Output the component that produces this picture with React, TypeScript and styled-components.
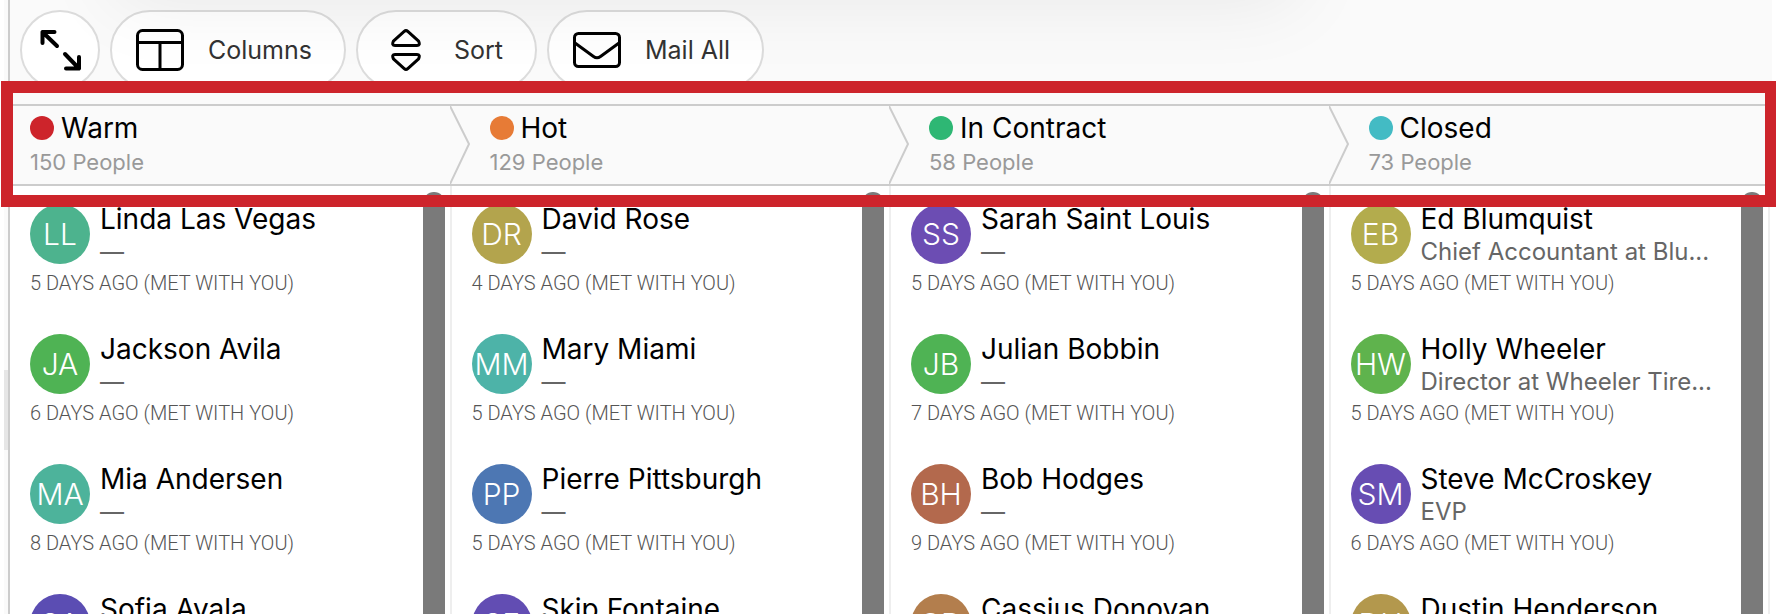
import React from 'react';
import styled, { createGlobalStyle } from 'styled-components';

const GlobalStyle = createGlobalStyle`
  *, *::before, *::after { box-sizing: border-box; }
  body {
    margin: 0;
    background: #fff;
    color: #000;
    font-family: Inter, "Liberation Sans", sans-serif;
  }
  h2, h3, p, ul { margin: 0; padding: 0; font-weight: 400; }
  ul { list-style: none; }
`;

const Page = styled.div`
  display: flex;
  height: 100vh;
  padding: 0 4px;
  overflow: hidden;
`;

const Gutter = styled.div`
  flex: none;
  display: flex;
  flex-direction: column;
  justify-content: flex-end;
  width: 4px;
  background: #fafafa;
`;

const GutterThumb = styled.div`
  height: 80px;
  margin-bottom: 164px;
  background: #e6e6e6;
`;

const Main = styled.main`
  position: relative;
  flex: 1;
  min-width: 0;
  display: flex;
  flex-direction: column;
  border-left: 2px solid #ccc;
  background: #fafafa;
`;

/* Soft shadow cast by the bar above the board */
const TopShadow = styled.div`
  position: absolute;
  z-index: 2;
  left: 6%;
  right: 27%;
  top: -200px;
  height: 200px;
  box-shadow: 0 0 80px rgba(0, 0, 0, 0.08);
  pointer-events: none;
`;

const Toolbar = styled.div`
  flex: none;
  display: flex;
  gap: 10px;
  padding: 10px 10px 14px;
`;

const ToolButton = styled.button<{ $round?: boolean }>`
  display: flex;
  align-items: center;
  justify-content: center;
  gap: 24px;
  height: 80px;
  min-width: 80px;
  padding: ${(p) => (p.$round ? '0' : '0 32px 0 24px')};
  border: 2px solid #dcdcdc;
  border-radius: 40px;
  background: #fff;
  color: #333;
  font: 400 25px Inter, "Liberation Sans", sans-serif;
`;

const StageHeader = styled.header`
  position: relative;
  flex: none;
  display: grid;
  grid-template-columns: repeat(4, 1fr);
  height: 82px;
  padding-right: 4px;
  border-top: 2px solid #ccc;
  border-bottom: 2px solid #ccc;
`;

const Highlight = styled.div`
  position: absolute;
  z-index: 3;
  inset: -25px -5px -23px -9px;
  border: 12px solid #cd242b;
  pointer-events: none;
`;

const Stage = styled.div`
  display: flex;
  padding-left: 20px;

  & + & { padding-left: 0; }
`;

const Chevron = styled.svg`
  flex: none;
  width: 20px;
  height: 78px;
  margin-right: 20px;
`;

const StageText = styled.div`
  padding-top: 6px;
`;

const StageName = styled.h2`
  display: flex;
  align-items: center;
  gap: 7px;
  font-size: 28px;
  line-height: 32px;
`;

const StageDot = styled.span<{ $color: string }>`
  width: 24px;
  height: 24px;
  border-radius: 50%;
  background: ${(p) => p.$color};
`;

const StageCount = styled.p`
  color: #999;
  font-size: 22px;
  line-height: 36px;
`;

const Board = styled.div`
  flex: 1;
  min-height: 0;
  display: grid;
  grid-template-columns: repeat(4, 1fr);
  margin-right: 2px;
  border-right: 2px solid #eee;
  background: #fff;
  box-shadow: 6px 0 0 #fff;
`;

const Column = styled.section`
  display: flex;
  min-width: 0;
  min-height: 0;

  & + & { border-left: 2px solid #eee; }
`;

const PeopleList = styled.ul`
  flex: 1;
  min-width: 0;
  padding: 18px 0 0 20px;
  overflow: hidden;
`;

const ScrollThumb = styled.div`
  flex: none;
  width: 22px;
  margin: 6px 5px 0 0;
  border-radius: 11px 11px 0 0;
  background: #7a7a7a;
`;

const Person = styled.li`
  height: 130px;
`;

const PersonHead = styled.div`
  display: flex;
  align-items: flex-start;
  gap: 10px;
`;

const Avatar = styled.span<{ $color: string }>`
  flex: none;
  display: flex;
  align-items: center;
  justify-content: center;
  width: 60px;
  height: 60px;
  border-radius: 50%;
  background: ${(p) => p.$color};
  color: #fff;
  font-size: 30px;
  font-weight: 300;
`;

const PersonText = styled.div`
  min-width: 0;
  white-space: nowrap;
`;

const PersonName = styled.h3`
  font-size: 28px;
  line-height: 30px;
`;

const PersonRole = styled.p`
  color: #666;
  font-size: 24px;
  line-height: 36px;
`;

const PersonMeta = styled.p`
  color: #555;
  font-family: Roboto, "Liberation Sans", sans-serif;
  font-size: 20px;
  font-weight: 300;
  line-height: 26px;
  text-transform: uppercase;
`;

const iconProps = {
  fill: 'none',
  stroke: '#000',
  strokeLinecap: 'round' as const,
  strokeLinejoin: 'round' as const,
  'aria-hidden': true,
};

const ExpandIcon = () => (
  <svg width="44" height="44" viewBox="0 0 44 44" strokeWidth="4" {...iconProps}>
    <path d="M4.5 15V4h12M4.5 4L19 18M28 40.5h13V29M41 40.5L27 26" />
  </svg>
);

const ColumnsIcon = () => (
  <svg width="48" height="42" viewBox="0 0 48 42" strokeWidth="3" {...iconProps}>
    <rect x="1.5" y="1.5" width="45" height="39" rx="5" />
    <path d="M1.5 13.5h45M24 14v26" />
  </svg>
);

const SortIcon = () => (
  <svg width="48" height="42" viewBox="0 0 48 42" strokeWidth="3" {...iconProps}>
    <path d="M22.2 2.4 11.4 12.2Q9.5 16.5 13 16.5H35Q38.5 16.5 36.6 12.2L25.8 2.4Q24 .8 22.2 2.4Z" />
    <path d="M22.2 39.6 11.4 29.8Q9.5 25.5 13 25.5H35Q38.5 25.5 36.6 29.8L25.8 39.6Q24 41.2 22.2 39.6Z" />
  </svg>
);

const MailIcon = () => (
  <svg width="48" height="36" viewBox="0 0 48 36" strokeWidth="3" {...iconProps}>
    <rect x="1.5" y="1.5" width="45" height="33" rx="4" />
    <path d="M2 11l18.5 13.5Q24 27 27.5 24.5L46 11" />
  </svg>
);

interface PersonData {
  initials: string;
  color: string;
  name: string;
  role?: string;
  days: number;
}

interface StageData {
  name: string;
  color: string;
  count: number;
  people: PersonData[];
}

const stages: StageData[] = [
  {
    name: 'Warm', color: '#cd242b', count: 150,
    people: [
      { initials: 'LL', color: '#4db38e', name: 'Linda Las Vegas', days: 5 },
      { initials: 'JA', color: '#4fb354', name: 'Jackson Avila', days: 6 },
      { initials: 'MA', color: '#4db39b', name: 'Mia Andersen', days: 8 },
      { initials: 'SA', color: '#5b4db3', name: 'Sofia Ayala', days: 8 },
    ],
  },
  {
    name: 'Hot', color: '#e77b36', count: 129,
    people: [
      { initials: 'DR', color: '#b3a44d', name: 'David Rose', days: 4 },
      { initials: 'MM', color: '#4db3a8', name: 'Mary Miami', days: 5 },
      { initials: 'PP', color: '#4d77b3', name: 'Pierre Pittsburgh', days: 5 },
      { initials: 'SF', color: '#624db3', name: 'Skip Fontaine', days: 6 },
    ],
  },
  {
    name: 'In Contract', color: '#2eb774', count: 58,
    people: [
      { initials: 'SS', color: '#6c4db3', name: 'Sarah Saint Louis', days: 5 },
      { initials: 'JB', color: '#4fb354', name: 'Julian Bobbin', days: 7 },
      { initials: 'BH', color: '#b3694d', name: 'Bob Hodges', days: 9 },
      { initials: 'CD', color: '#b37e4d', name: 'Cassius Donovan', days: 9 },
    ],
  },
  {
    name: 'Closed', color: '#43bbc4', count: 73,
    people: [
      { initials: 'EB', color: '#b3ac4d', name: 'Ed Blumquist', role: 'Chief Accountant at Blu...', days: 5 },
      { initials: 'HW', color: '#5fb34d', name: 'Holly Wheeler', role: 'Director at Wheeler Tire...', days: 5 },
      { initials: 'SM', color: '#674db3', name: 'Steve McCroskey', role: 'EVP', days: 6 },
      { initials: 'DH', color: '#b3984d', name: 'Dustin Henderson', days: 6 },
    ],
  },
];

export default function App() {
  return (
    <>
      <GlobalStyle />
      <Page>
        <Gutter>
          <GutterThumb />
        </Gutter>
        <Main>
          <TopShadow />
          <Toolbar>
            <ToolButton $round aria-label="Expand">
              <ExpandIcon />
            </ToolButton>
            <ToolButton>
              <ColumnsIcon />
              Columns
            </ToolButton>
            <ToolButton>
              <SortIcon />
              Sort
            </ToolButton>
            <ToolButton>
              <MailIcon />
              Mail All
            </ToolButton>
          </Toolbar>
          <StageHeader>
            {stages.map((stage, i) => (
              <Stage key={stage.name}>
                {i > 0 && (
                  <Chevron viewBox="0 0 20 78" fill="none" stroke="#ccc" strokeWidth="2" aria-hidden="true">
                    <path d="M0 0l19 38L0 78" />
                  </Chevron>
                )}
                <StageText>
                  <StageName>
                    <StageDot $color={stage.color} />
                    {stage.name}
                  </StageName>
                  <StageCount>{stage.count} People</StageCount>
                </StageText>
              </Stage>
            ))}
            <Highlight />
          </StageHeader>
          <Board>
            {stages.map((stage) => (
              <Column key={stage.name} aria-label={stage.name}>
                <PeopleList>
                  {stage.people.map((person) => (
                    <Person key={person.name}>
                      <PersonHead>
                        <Avatar $color={person.color}>{person.initials}</Avatar>
                        <PersonText>
                          <PersonName>{person.name}</PersonName>
                          <PersonRole>{person.role ?? '—'}</PersonRole>
                        </PersonText>
                      </PersonHead>
                      <PersonMeta>{person.days} days ago (met with you)</PersonMeta>
                    </Person>
                  ))}
                </PeopleList>
                <ScrollThumb />
              </Column>
            ))}
          </Board>
        </Main>
      </Page>
    </>
  );
}
